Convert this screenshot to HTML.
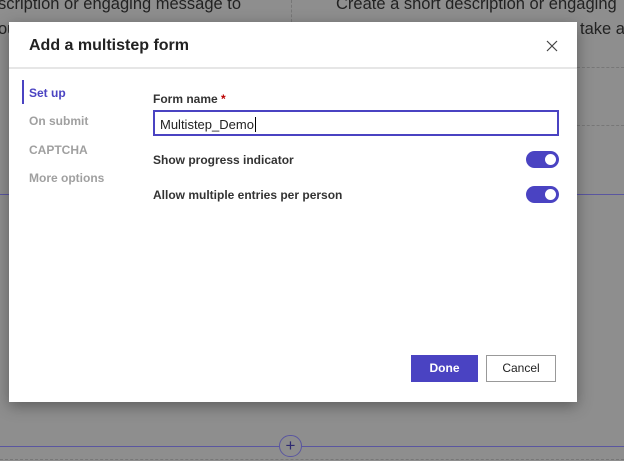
<!DOCTYPE html>
<html><head><meta charset="utf-8"><style>
*{margin:0;padding:0;box-sizing:border-box}
body{width:624px;height:461px;overflow:hidden;background:#8e8e8e;font-family:"Liberation Sans",sans-serif;position:relative}
.bgt{position:absolute;font-size:16.5px;color:#222;white-space:nowrap}
.dlg{position:absolute;left:9px;top:22px;width:568px;height:380px;background:#fff;box-shadow:0 4px 14px rgba(0,0,0,.35)}
.hd{height:47px;border-bottom:2px solid #e6e6e6;position:relative}
.hd h1{position:absolute;left:20px;top:15px;font-size:16px;font-weight:bold;color:#222}
.x{position:absolute;left:537px;top:18px}
.nav{position:absolute;left:14px;font-size:12px;color:#a0a0a0;padding-left:6px;font-weight:bold}
.lab{position:absolute;left:144px;font-size:12px;color:#333;font-weight:bold}
.tog{position:absolute;left:517px;width:33px;height:17px;border-radius:9px;background:#4a43c2}
.tog::after{content:"";position:absolute;right:3px;top:3px;width:11px;height:11px;border-radius:50%;background:#fff}
</style></head><body>
<div class="bgt" style="left:-2px;top:-5px">scription or engaging message to</div>
<div class="bgt" style="left:336px;top:-5px">Create a short description or engaging</div>
<div class="bgt" style="left:-2px;top:20px">ou</div>
<div class="bgt" style="left:580px;top:20px">take a</div>
<div style="position:absolute;left:291px;top:0;height:22px;border-left:1px dashed #777"></div>
<div style="position:absolute;left:577px;right:0;top:67px;border-top:1px dashed #777"></div>
<div style="position:absolute;left:577px;right:0;top:125px;border-top:1px dashed #777"></div>
<div style="position:absolute;left:0;right:0;top:194px;border-top:1px solid #5a56a0"></div>
<div style="position:absolute;left:0;right:0;top:446px;border-top:1px solid #5a56a0"></div>
<div style="position:absolute;left:0;right:0;top:459px;border-top:1px dashed #777"></div>
<div style="position:absolute;left:279px;top:435px;width:23px;height:22px;border-radius:11px;border:1px solid #5a56a0;background:#8e8e8e;text-align:center;line-height:19px;font-size:17px;color:#2e2a70">+</div>
<div class="dlg">
<div class="hd"><h1>Add a multistep form</h1>
<svg class="x" width="12" height="12" viewBox="0 0 12 12"><path d="M1 1L11 11M11 1L1 11" stroke="#444" stroke-width="1.2"/></svg></div>
<div style="position:absolute;left:13px;top:58px;height:24px;border-left:2px solid #4a43c2"></div>
<div class="nav" style="top:64px;color:#4a43c2">Set up</div>
<div class="nav" style="top:92px">On submit</div>
<div class="nav" style="top:121px">CAPTCHA</div>
<div class="nav" style="top:149px">More options</div>
<div class="lab" style="top:70px">Form name <span style="color:#b00">*</span></div>
<div style="position:absolute;left:144px;top:88px;width:406px;height:26px;border:2px solid #4a43c2;font-size:13px;padding:5px 5px;color:#222">Multistep_Demo<span style="border-left:1px solid #000;margin-left:1px"></span></div>
<div class="lab" style="top:131px">Show progress indicator</div>
<div class="tog" style="top:129px"></div>
<div class="lab" style="top:166px">Allow multiple entries per person</div>
<div class="tog" style="top:164px"></div>
<div style="position:absolute;left:402px;top:333px;width:67px;height:27px;background:#4a43c2;color:#fff;font-size:12px;font-weight:bold;text-align:center;line-height:27px">Done</div>
<div style="position:absolute;left:477px;top:333px;width:70px;height:27px;border:1px solid #999;color:#222;font-size:12px;text-align:center;line-height:25px">Cancel</div>
</div>
</body></html>
